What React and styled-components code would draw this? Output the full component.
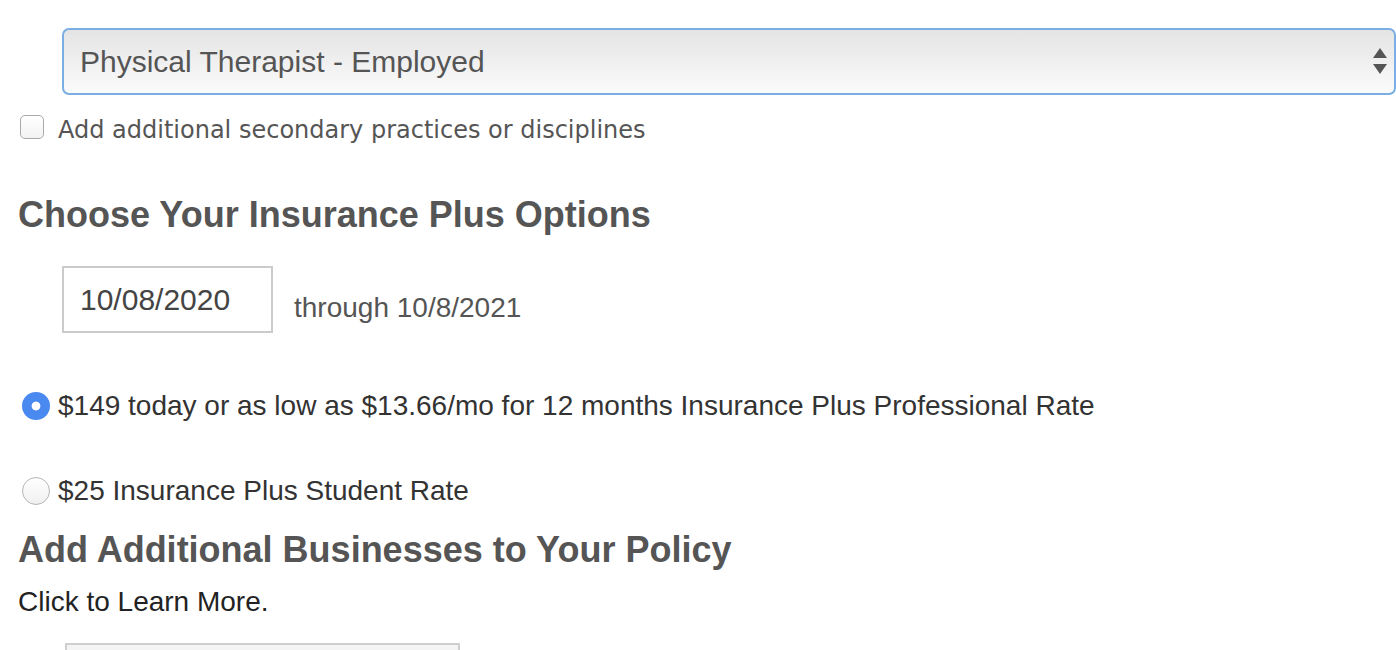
import React from 'react';
import styled, { createGlobalStyle } from 'styled-components';

const GlobalStyle = createGlobalStyle`
  html, body {
    margin: 0;
    padding: 0;
    background: #fff;
    overflow: hidden;
  }
  body {
    font-family: "Liberation Sans", Arial, Helvetica, sans-serif;
    color: #333;
  }
`;

const Page = styled.div`
  display: flex;
  flex-direction: column;
  padding-left: 18px;
  width: 1396px;
  box-sizing: border-box;
`;

const SelectWrap = styled.div`
  position: relative;
  margin: 28px 0 0 44px;
  height: 67px;
`;

const Select = styled.select`
  appearance: none;
  -webkit-appearance: none;
  width: 100%;
  height: 100%;
  box-sizing: border-box;
  border: 2px solid #7baee2;
  border-radius: 7px;
  background: linear-gradient(#e4e4e4, #fbfbfb);
  font-family: "Liberation Sans", Arial, sans-serif;
  font-size: 30px;
  color: #555;
  padding: 0 40px 0 16px;
  outline: none;
`;

const Arrows = styled.svg`
  position: absolute;
  right: 8px;
  top: 20px;
  pointer-events: none;
`;

const CheckRow = styled.label`
  display: flex;
  align-items: center;
  height: 36px;
  margin-top: 14px;
  gap: 14px;
  font-family: "DejaVu Sans", Verdana, sans-serif;
  font-size: 24px;
  color: #555;
`;

const CheckText = styled.span`
  padding-top: 5px;
`;

const Checkbox = styled.input.attrs({ type: 'checkbox' })`
  appearance: none;
  -webkit-appearance: none;
  margin: 0 0 0 2px;
  width: 24px;
  height: 24px;
  box-sizing: border-box;
  border: 1.5px solid #a9a9a9;
  border-radius: 5px;
  background: linear-gradient(#fff, #f2f2f2);
`;

const Heading = styled.h2`
  margin: ${p => p.$top}px 0 0;
  font-size: 36px;
  line-height: 50px;
  font-weight: bold;
  color: #555;
`;

const DateRow = styled.div`
  display: flex;
  align-items: center;
  margin: 26px 0 0 44px;
  gap: 21px;
`;

const DateInput = styled.input`
  width: 211px;
  height: 67px;
  box-sizing: border-box;
  border: 2px solid #cbcbcb;
  padding: 0 16px;
  font-family: "Liberation Sans", Arial, sans-serif;
  font-size: 30px;
  color: #444;
  outline: none;
`;

const Through = styled.span`
  font-size: 28px;
  color: #555;
  margin-top: 16px;
`;

const RadioRow = styled.label`
  display: flex;
  align-items: center;
  height: 40px;
  margin-top: ${p => p.$top}px;
  gap: 8px;
  font-size: 28px;
  color: #333;
`;

const Radio = styled.input.attrs({ type: 'radio', name: 'rate' })`
  appearance: none;
  -webkit-appearance: none;
  margin: 0 0 0 4px;
  width: 28px;
  height: 28px;
  box-sizing: border-box;
  border-radius: 50%;
  border: 1.5px solid #b5b5b5;
  background: linear-gradient(#fff, #f0f0f0);
  &:checked {
    border: none;
    background: radial-gradient(circle, #fff 0 4px, #4a89ef 4.8px);
  }
`;

const Text = styled.div`
  margin-top: 7px;
  font-size: 28px;
  line-height: 40px;
  color: #222;
`;

const Box = styled.div`
  margin: 21px 0 0 47px;
  width: 395px;
  height: 40px;
  box-sizing: border-box;
  border: 2px solid #cfcfcf;
  background: #f4f4f4;
`;

export default function App() {
  return (
    <>
      <GlobalStyle />
      <Page>
        <SelectWrap>
          <Select defaultValue="pt">
            <option value="pt">Physical Therapist - Employed</option>
          </Select>
          <Arrows width="16" height="28" viewBox="0 0 16 28">
            <path d="M1 10 L8 0 L15 10 Z" fill="#555" />
            <path d="M1 16 L8 26 L15 16 Z" fill="#555" />
          </Arrows>
        </SelectWrap>

        <CheckRow>
          <Checkbox />
          <CheckText>Add additional secondary practices or disciplines</CheckText>
        </CheckRow>

        <Heading $top={45}>Choose Your Insurance Plus Options</Heading>

        <DateRow>
          <DateInput defaultValue="10/08/2020" readOnly />
          <Through>through 10/8/2021</Through>
        </DateRow>

        <RadioRow $top={53}>
          <Radio defaultChecked />
          $149 today or as low as $13.66/mo for 12 months Insurance Plus Professional Rate
        </RadioRow>

        <RadioRow $top={45}>
          <Radio />
          $25 Insurance Plus Student Rate
        </RadioRow>

        <Heading $top={14}>Add Additional Businesses to Your Policy</Heading>

        <Text>Click to Learn More.</Text>

        <Box />
      </Page>
    </>
  );
}
